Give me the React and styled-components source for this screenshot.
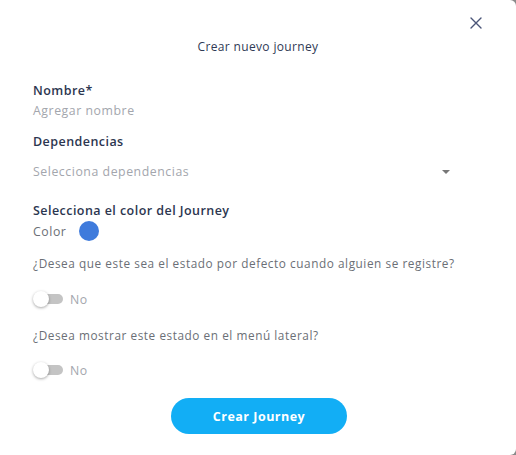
import React from "react";
import styled, { createGlobalStyle } from "styled-components";

const Global = createGlobalStyle`
  html, body { margin: 0; padding: 0; background: #8a8a8a; }
  body { font-family: "Open Sans", "Noto Sans", sans-serif; }
  * { box-sizing: border-box; }
`;

const Modal = styled.div`
  width: 516px;
  height: 455px;
  background: #fff;
  border-top-right-radius: 6px;
  border-bottom-right-radius: 6px;
  position: relative;
  padding: 38px 33px 0 33px;
  display: flex;
  flex-direction: column;
`;

const Close = styled.button`
  position: absolute;
  top: 17px;
  right: 34px;
  width: 12px;
  height: 12px;
  padding: 0;
  border: none;
  background: none;
  display: flex;
`;

const Title = styled.h2`
  margin: 0 0 26px;
  text-align: center;
  font-size: 12px;
  font-weight: 500;
  letter-spacing: 0.35px;
  color: #2f3a55;
  line-height: 18px;
`;

const Label = styled.div`
  font-size: 12.5px;
  font-weight: 600;
  letter-spacing: 0.45px;
  color: #2c3650;
  line-height: 18px;
`;

const Placeholder = styled.div`
  font-size: 12.3px;
  letter-spacing: 0.55px;
  color: #a3a6ad;
  line-height: 18px;
  margin-top: ${(p) => p.$mt || 0}px;
`;

const Field = styled.div`
  display: flex;
  flex-direction: column;
  margin-bottom: ${(p) => p.$mb || 0}px;
`;

const SelectRow = styled.div`
  display: flex;
  align-items: center;
  justify-content: space-between;
  margin-top: ${(p) => p.$mt || 0}px;
  padding-right: 33px;
`;

const Caret = styled.span`
  width: 0;
  height: 0;
  border-left: 4px solid transparent;
  border-right: 4px solid transparent;
  border-top: 4px solid #777;
`;

const ColorRow = styled.div`
  display: flex;
  align-items: center;
  gap: 13px;
  margin-top: 1px;
`;

const ColorText = styled.span`
  font-size: 12.3px;
  letter-spacing: 0.55px;
  color: #6b6f76;
`;

const Swatch = styled.span`
  width: 20px;
  height: 20px;
  border-radius: 50%;
  background: #3f7bdc;
`;

const Question = styled.div`
  font-size: 11.8px;
  letter-spacing: 0.55px;
  color: #6b6f76;
  line-height: 18px;
`;

const ToggleRow = styled.div`
  display: flex;
  align-items: center;
  gap: 7px;
  margin: ${(p) => p.$m};
`;

const Track = styled.span`
  position: relative;
  width: 30px;
  height: 20px;
  display: inline-flex;
  align-items: center;
  &::before {
    content: "";
    position: absolute;
    left: 3px;
    right: 0;
    height: 10px;
    border-radius: 5px;
    background: #c4c4c4;
  }
  &::after {
    content: "";
    position: absolute;
    left: 0;
    width: 16px;
    height: 16px;
    border-radius: 50%;
    background: #fff;
    box-shadow: 0 1px 3px rgba(0,0,0,0.35);
  }
`;

const ToggleText = styled.span`
  font-size: 12.3px;
  letter-spacing: 0.55px;
  color: #a3a6ad;
`;

const Button = styled.button`
  align-self: center;
  width: 176px;
  height: 36px;
  border-radius: 18px;
  border: none;
  background: #12aef5;
  color: #fff;
  font-family: inherit;
  font-size: 12.5px;
  font-weight: 700;
  letter-spacing: 0.5px;
  margin-top: 18px;
  margin-left: 2px;
`;

export default function App() {
  return (
    <>
      <Global />
      <Modal>
        <Close aria-label="Cerrar">
          <svg width="12" height="12" viewBox="0 0 12 12">
            <path d="M1 1L11 11M11 1L1 11" stroke="#4a5578" strokeWidth="1.4" strokeLinecap="round" />
          </svg>
        </Close>
        <Title>Crear nuevo journey</Title>
        <Field $mb={13}>
          <Label>Nombre*</Label>
          <Placeholder $mt={2}>Agregar nombre</Placeholder>
        </Field>
        <Field $mb={21}>
          <Label>Dependencias</Label>
          <SelectRow $mt={12}>
            <Placeholder>Selecciona dependencias</Placeholder>
            <Caret />
          </SelectRow>
        </Field>
        <Field $mb={13}>
          <Label>Selecciona el color del Journey</Label>
          <ColorRow>
            <ColorText>Color</ColorText>
            <Swatch />
          </ColorRow>
        </Field>
        <Question>¿Desea que este sea el estado por defecto cuando alguien se registre?</Question>
        <ToggleRow $m="17px 0 17px">
          <Track />
          <ToggleText>No</ToggleText>
        </ToggleRow>
        <Question>¿Desea mostrar este estado en el menú lateral?</Question>
        <ToggleRow $m="16px 0 0">
          <Track />
          <ToggleText>No</ToggleText>
        </ToggleRow>
        <Button>Crear Journey</Button>
      </Modal>
    </>
  );
}
